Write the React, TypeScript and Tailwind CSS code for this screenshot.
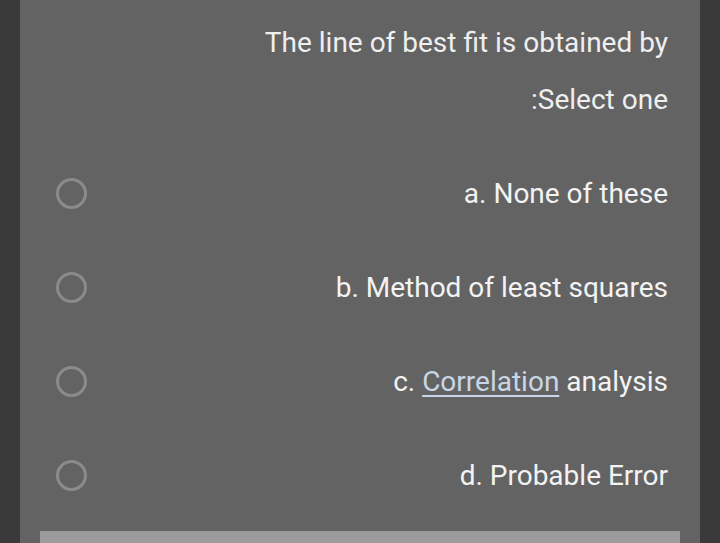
const options = [
  { key: 'a', label: 'None of these' },
  { key: 'b', label: 'Method of least squares' },
  { key: 'c', label: 'analysis', link: 'Correlation' },
  { key: 'd', label: 'Probable Error' },
];

export default function App() {
  return (
    <div className="h-[543px] overflow-hidden bg-[#3a3a3a] px-[20px] font-['Roboto',sans-serif]">
      <div className="flex h-full flex-col bg-[#636363]">
        {/* Question */}
        <div className="mt-[25px] pr-[32px] text-right text-[28px] leading-[36px] text-[#efefef]">
          The line of best fit is obtained by
        </div>
        <div className="mt-[21px] pr-[32px] text-right text-[28px] leading-[36px] text-[#efefef]">
          :Select one
        </div>

        {/* Answers */}
        <div className="mt-[28px] flex flex-col">
          {options.map((o) => (
            <label
              key={o.key}
              className="flex h-[94px] items-center justify-between pl-[36px] pr-[32px]"
            >
              <span className="h-[31px] w-[31px] rounded-full border-[3px] border-[#8b8b8b]" />
              <span className="pt-[2px] text-[28px] leading-[36px] text-[#f3f3f3]">
                {o.key}.{' '}
                {o.link && (
                  <>
                    <span className="text-[#c8d6e6] underline decoration-[2px] underline-offset-[4px]">
                      {o.link}
                    </span>{' '}
                  </>
                )}
                {o.label}
              </span>
            </label>
          ))}
        </div>

        <div className="mx-[20px] mt-[9px] h-[40px] bg-[#9b9b9b]" />
      </div>
    </div>
  );
}
